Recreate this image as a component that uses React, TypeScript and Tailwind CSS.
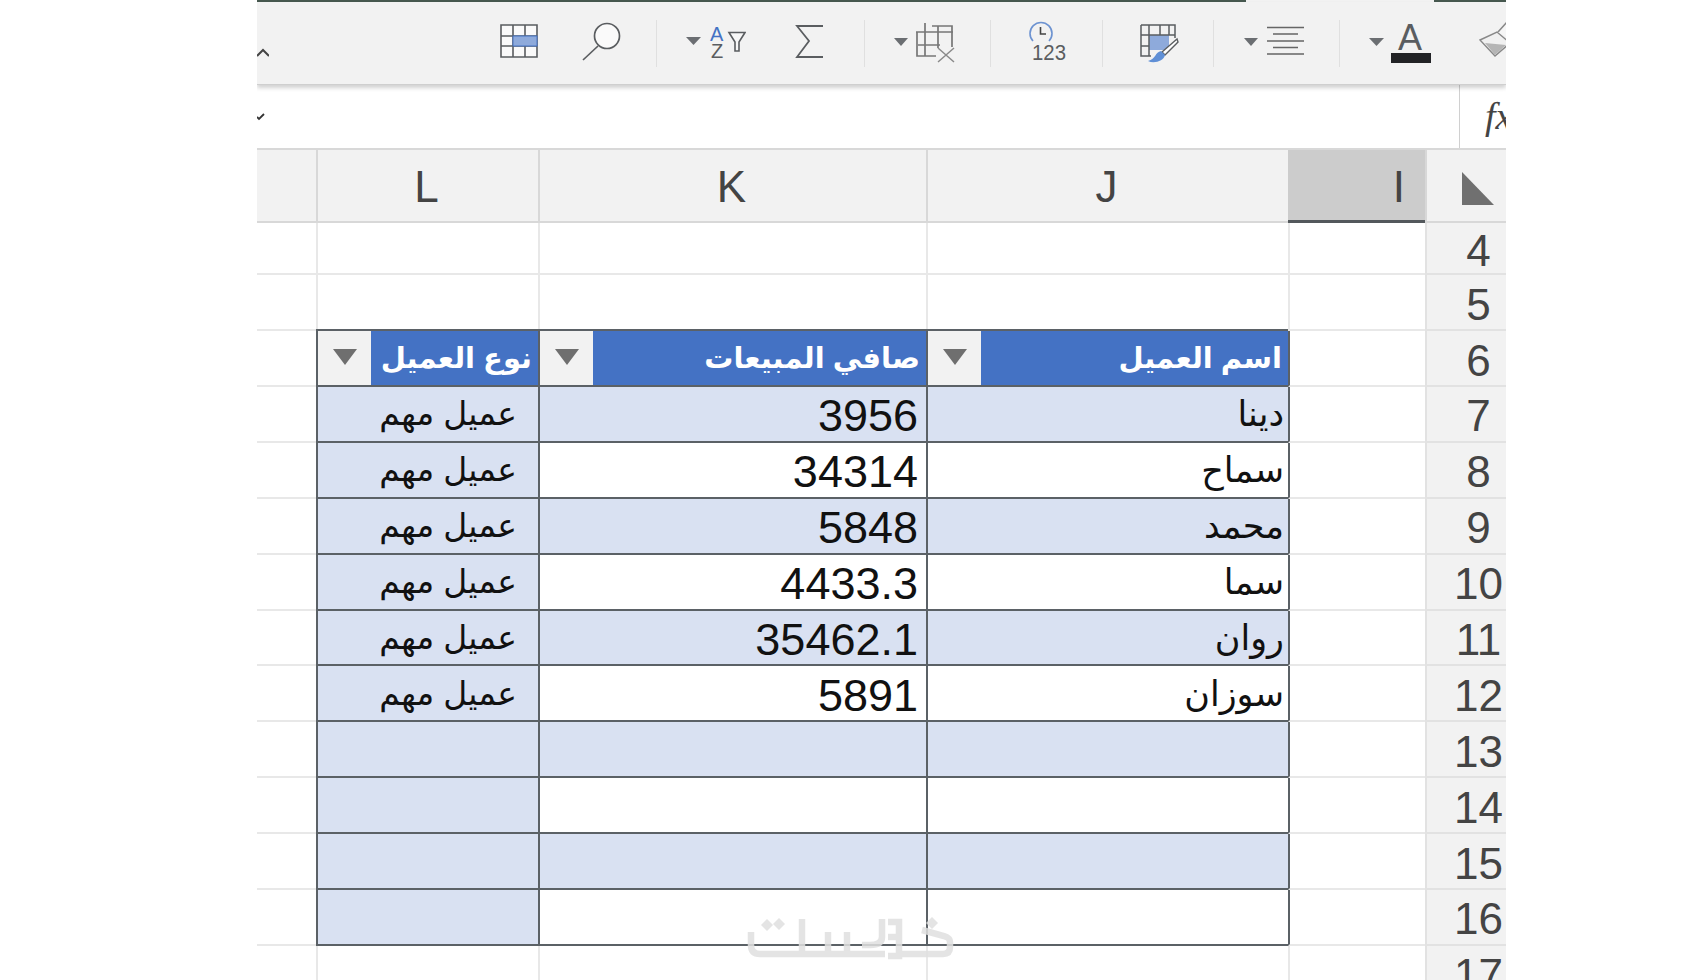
const COLS = "grid grid-cols-[59px_222px_388px_362px_137px_81px] grid-rows-[minmax(0,1fr)] leading-none";
const ARROW = "#6b6e72";
const INK = "#5a5d60";

function Sep({ ml }: { ml: string }) {
  return <div className={`w-[1px] h-[47px] bg-[#e0e0e0] shrink-0 ${ml}`} />;
}

function Chevron() {
  return (
    <svg width="12" height="50" className="shrink-0">
      <path d="M0 36 L6 30 L12 36" fill="none" stroke="#444" strokeWidth="2" />
    </svg>
  );
}

function TableIcon() {
  return (
    <svg width="40" height="50" className="shrink-0 ml-[231px]">
      <path d="M1 5 H37 V37 H1 Z M13 5 V37 M25 5 V37 M1 16 H37 M1 26 H37" fill="#fafafa" stroke={INK} strokeWidth="1.6" />
      <rect x="13" y="16" width="24" height="10" fill="#8eaadb" stroke="#4472c4" />
    </svg>
  );
}

function Search() {
  return (
    <svg width="40" height="50" className="shrink-0 ml-[42px]">
      <circle cx="25" cy="16" r="12.5" fill="#fafafa" stroke={INK} strokeWidth="1.7" />
      <path d="M16 26 L1 40" stroke={INK} strokeWidth="1.7" fill="none" />
    </svg>
  );
}

function Sort() {
  return (
    <svg width="60" height="50" className="shrink-0 ml-[29px]">
      <polygon points="0,17 15,17 7.5,25" fill={ARROW} />
      <text x="24" y="21" fontSize="20" fill="#4472c4" fontFamily="Liberation Sans">A</text>
      <text x="25" y="38" fontSize="20" fill={INK} fontFamily="Liberation Sans">Z</text>
      <path d="M43 12.5 H59 L53 22 V31 H49 V22 Z" fill="#f7f7f7" stroke={INK} strokeWidth="1.6" />
    </svg>
  );
}

function Sigma() {
  return (
    <svg width="30" height="50" className="shrink-0 ml-[49px]">
      <path d="M28 6 H2 L14 21 L2 37 H28" fill="none" stroke={INK} strokeWidth="1.8" />
    </svg>
  );
}

function DeleteTable() {
  return (
    <svg width="64" height="50" className="shrink-0 ml-[27px]">
      <polygon points="2,18 16,18 9,26" fill={ARROW} />
      <path d="M33 3 V36 M24 12 H61 M40 6 H60 V27 M46 6 V28 M25 12 V36 H44 M26 25 H48" fill="none" stroke="#777" strokeWidth="1.7" />
      <path d="M46 28 L62 42 M62 28 L46 42" fill="none" stroke="#8a8a8a" strokeWidth="1.5" />
    </svg>
  );
}

function Clock() {
  return (
    <svg width="42" height="50" className="shrink-0 ml-[36px]">
      <path d="M6 21 A11 11 0 1 1 22 21" fill="none" stroke="#6d93d1" strokeWidth="1.6" />
      <path d="M13.5 7 V14 H19" fill="none" stroke="#444" strokeWidth="1.6" />
      <text x="5" y="40" fontSize="22" fill={INK} fontFamily="Liberation Sans" textLength="34" lengthAdjust="spacingAndGlyphs">123</text>
    </svg>
  );
}

function TableBrush() {
  return (
    <svg width="40" height="50" className="shrink-0 ml-[36px]">
      <rect x="10" y="15" width="20" height="15" fill="#8eaadb" />
      <path d="M2 5 H36 V18 M2 5 V36 H12 M10 5 V36 M21 5 V15 M30 5 V15 M2 15 H36 M2 26 H10" fill="none" stroke={INK} strokeWidth="1.5" />
      <path d="M38 19 L23 32 L26 35 L39 22 Z" fill="#fff" stroke={INK} strokeWidth="1.4" />
      <path d="M22 31 C16 32 17 39 9 41 C15 44 25 41 26 35 Z" fill="#5f8fd6" />
    </svg>
  );
}

function Align() {
  return (
    <svg width="62" height="50" className="shrink-0 ml-[29px]">
      <polygon points="1,18 15,18 8,26" fill={ARROW} />
      <path d="M24 7.5 H61 M30 14 H55 M24 21 H61 M30 27.5 H55 M24 34 H61" fill="none" stroke="#666" strokeWidth="1.7" />
    </svg>
  );
}

function FontColor() {
  return (
    <svg width="64" height="50" className="shrink-0 ml-[27px]">
      <polygon points="2,18 17,18 9.5,26" fill={ARROW} />
      <text x="31" y="30" fontSize="36" fill={INK} fontFamily="Liberation Sans">A</text>
      <rect x="24" y="33" width="40" height="10" fill="#222326" />
    </svg>
  );
}

function Broom() {
  return (
    <svg width="40" height="50" className="shrink-0 ml-[45px]">
      <polygon points="4,20 21,12 34,23 19,36" fill="#f0f0f0" stroke="#888" strokeWidth="1.4" />
      <polygon points="9,23 30,25 19,35" fill="#b5b5b5" />
      <path d="M22 12 L31 2 L38 8 L32 18" fill="#f6f6f6" stroke="#888" strokeWidth="1.6" />
    </svg>
  );
}

function FilterBtn() {
  return (
    <div className="w-[53px] shrink-0 bg-[#f2f2f2] flex items-center justify-center">
      <svg width="26" height="18" className="mb-[2px]">
        <polygon points="1,1 25,1 13,17" fill="#6f6f6f" />
      </svg>
    </div>
  );
}

function Head({ label }: { label: string }) {
  return (
    <div className="min-w-0 -mt-[2px] flex border-[#5b6166] border-t-2 border-b-2 border-l-2 bg-[#4472c4]">
      <FilterBtn />
      <div
        dir="rtl"
        className="flex-1 min-w-0 whitespace-nowrap pr-[6px] text-white font-bold text-[29px] leading-[54px] font-['Liberation_Sans','DejaVu_Sans',sans-serif]"
      >
        {label}
      </div>
    </div>
  );
}

type Data = { n: number; name?: string; net?: string; kind?: string };

const rows: Data[] = [
  { n: 7, name: "دينا", net: "3956", kind: "عميل مهم" },
  { n: 8, name: "سماح", net: "34314", kind: "عميل مهم" },
  { n: 9, name: "محمد", net: "5848", kind: "عميل مهم" },
  { n: 10, name: "سما", net: "4433.3", kind: "عميل مهم" },
  { n: 11, name: "روان", net: "35462.1", kind: "عميل مهم" },
  { n: 12, name: "سوزان", net: "5891", kind: "عميل مهم" },
  { n: 13 },
  { n: 14 },
  { n: 15 },
  { n: 16 },
];

function RowNum({ n }: { n: number }) {
  return (
    <div className="bg-[#f2f2f2] border-l-2 border-b-2 border-[#e2e2e2] pl-[24px] pt-[5px] flex items-center justify-center text-[44px] text-[#444]">
      {n}
    </div>
  );
}

function EmptyRow({ n, h }: { n: number; h: string }) {
  return (
    <div className={`${COLS} ${h}`}>
      <div className="border-b-2 border-[#e8e8e8]" />
      <div className="border-l-2 border-b-2 border-[#e8e8e8]" />
      <div className="border-l-2 border-b-2 border-[#e8e8e8]" />
      <div className="border-l-2 border-b-2 border-[#e8e8e8]" />
      <div className="border-l-2 border-b-2 border-[#e8e8e8]" />
      <RowNum n={n} />
    </div>
  );
}

function DataRow({ d, i }: { d: Data; i: number }) {
  const band = i % 2 === 0 ? "bg-[#d9e1f2]" : "bg-white";
  return (
    <div className={`${COLS} h-[55.9px]`}>
      <div className="border-b-2 border-[#e8e8e8]" />
      <div
        dir="rtl"
        className="bg-[#d9e1f2] border-l-2 border-b-2 border-[#5b6166] pr-[21px] flex items-center text-[33px] text-[#111] whitespace-nowrap font-['Liberation_Sans','DejaVu_Sans',sans-serif]"
      >
        {d.kind}
      </div>
      <div className={`${band} border-l-2 border-b-2 border-[#5b6166] pt-[4px] flex items-center justify-end pr-[8px] text-[45px] text-[#111]`}>
        {d.net}
      </div>
      <div
        dir="rtl"
        className={`${band} border-l-2 border-b-2 border-[#5b6166] flex items-center pr-[4px] text-[35px] text-[#111] whitespace-nowrap font-['Liberation_Sans','DejaVu_Sans',sans-serif]`}
      >
        {d.name}
      </div>
      <div className="border-l-2 border-l-[#5b6166] border-b-2 border-b-[#e8e8e8]" />
      <RowNum n={d.n} />
    </div>
  );
}

function Watermark() {
  return (
    <svg width="220" height="60" className="absolute left-[483px] top-[910px] opacity-85">
      <g fill="none" stroke="#e0e0e0" strokeWidth="6.5">
        <path d="M11 22 V35 Q11 44 20 44 H145" />
        <path d="M62 9 V44" />
        <path d="M88 22 V44" />
        <path d="M107 22 V44" />
        <path d="M142 9 V27 Q142 35 130 35 H122" />
        <path d="M148 12 H159 V46 H148" />
        <path d="M148 27 H159" />
        <path d="M159 44 H203 Q210 44 210 37 V32 Q210 28 204 26 L182 20" />
      </g>
      <g fill="#e0e0e0">
        <polygon points="27,9 33,15 27,21 21,15" />
        <polygon points="39,8 45,14 39,20 33,14" />
        <polygon points="192,7 198,13 192,19 186,13" />
      </g>
    </svg>
  );
}

export default function App() {
  return (
    <div className="h-[980px] overflow-hidden bg-white font-['Liberation_Sans',sans-serif]">
      <div className="relative ml-[257px] w-[1249px] h-[980px] overflow-hidden">
        <div className="flex h-[2px]">
          <div className="w-[989px] bg-[#46584f]" />
          <div className="w-[188px] bg-[#f2f2f2]" />
          <div className="flex-1 bg-[#46584f]" />
        </div>
        <div className="relative z-10 h-[83px] bg-[#f2f2f2] border-b border-[#cfcfcf] shadow-[0_3px_4px_rgba(0,0,0,0.18)] pt-[18px] flex items-start">
          <Chevron />
          <TableIcon />
          <Search />
          <Sep ml="ml-[34px]" />
          <Sort />
          <Sigma />
          <Sep ml="ml-[39px]" />
          <DeleteTable />
          <Sep ml="ml-[34px]" />
          <Clock />
          <Sep ml="ml-[33px]" />
          <TableBrush />
          <Sep ml="ml-[34px]" />
          <Align />
          <Sep ml="ml-[34px]" />
          <FontColor />
          <Broom />
        </div>
        <div className="h-[65px] bg-white flex border-b-2 border-[#d8d8d8]">
          <svg width="8" height="63" className="shrink-0">
            <path d="M0 32 L2 34 L7 29" fill="none" stroke="#333" strokeWidth="1.8" />
          </svg>
          <div className="ml-[1194px] w-[47px] shrink-0 border-l border-[#d0d0d0] pl-[25px] flex items-center text-[38px] italic text-[#444] font-['Liberation_Serif',serif] whitespace-nowrap">
            fx
          </div>
        </div>
        <div className={`${COLS} h-[73px] bg-[#f2f2f2] text-[44px] text-[#444]`}>
          <div className="border-b-2 border-[#d8d8d8]" />
          <div className="border-l-2 border-b-2 border-[#d8d8d8] pr-[3px] pt-[3px] flex items-center justify-center">L</div>
          <div className="border-l-2 border-b-2 border-[#d8d8d8] pr-[3px] pt-[3px] flex items-center justify-center">K</div>
          <div className="border-l-2 border-b-2 border-[#d8d8d8] pr-[3px] pt-[3px] flex items-center justify-center">J</div>
          <div className="bg-[#cccccc] border-b-[3px] border-[#53585c] flex items-center justify-end pr-[20px] pt-[3px]">I</div>
          <div className="border-l-2 border-b-2 border-[#d8d8d8] flex items-center pl-[35px]">
            <svg width="32" height="33" className="mt-[6px]">
              <polygon points="0,0 32,33 0,33" fill="#707070" />
            </svg>
          </div>
        </div>
        <EmptyRow n={4} h="h-[52px]" />
        <EmptyRow n={5} h="h-[56px]" />
        <div className={`${COLS} h-[56px]`}>
          <div className="border-b-2 border-[#e8e8e8]" />
          <Head label="نوع العميل" />
          <Head label="صافي المبيعات" />
          <Head label="اسم العميل" />
          <div className="border-l-2 border-l-[#5b6166] border-b-2 border-b-[#e8e8e8]" />
          <RowNum n={6} />
        </div>
        {rows.map((d, i) => (
          <DataRow key={d.n} d={d} i={i} />
        ))}
        <EmptyRow n={17} h="h-[56px]" />
        <Watermark />
      </div>
    </div>
  );
}
